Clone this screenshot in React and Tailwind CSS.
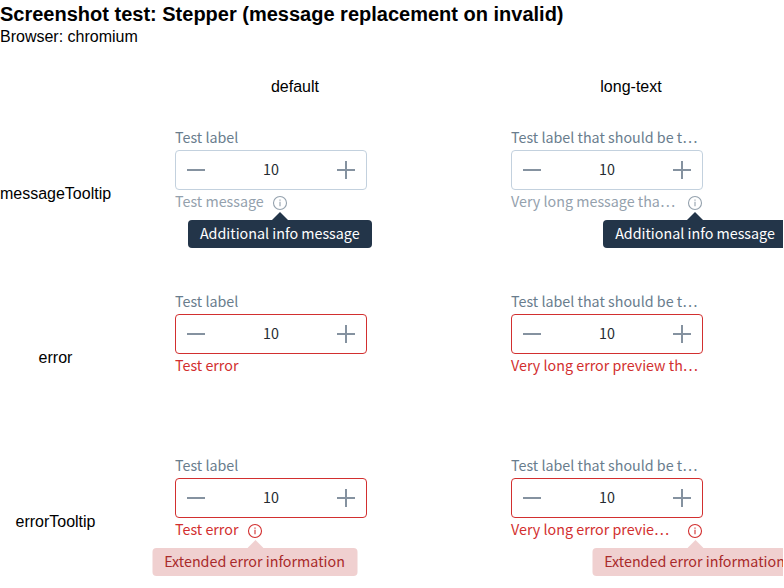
const ui = "font-['Noto_Sans_CJK_SC',sans-serif] text-[14.3px] leading-6";

function InfoIcon() {
  return (
    <svg width="16" height="16" viewBox="0 0 16 16" fill="none" className="block">
      <circle cx="8" cy="8" r="6.5" stroke="currentColor" strokeWidth="1.1" />
      <path d="M8 6.8v4.4M8 4.6v1.2" stroke="currentColor" strokeWidth="1.1" />
    </svg>
  );
}

function Tooltip({ text, error }) {
  return (
    <div className={`absolute top-[25px] -translate-x-1/2 h-7 rounded flex items-center justify-center whitespace-nowrap ${error ? "left-[7.5px] w-[205px] bg-[#f0d0d0] text-[#a92a2a]" : "left-1/2 w-[184px] bg-[#233549] text-white"}`}>
      <svg width="16" height="8" viewBox="0 0 16 8" className={`absolute -top-2 -translate-x-1/2 ${error ? "left-[103px] text-[#f0d0d0]" : "left-1/2 text-[#233549]"}`}>
        <path d="M0 8L8 0l8 8z" fill="currentColor" />
      </svg>
      <span className="relative -top-px">{text}</span>
    </div>
  );
}

function Stepper({ label, message, error, tooltip }) {
  return (
    <div className={`w-48 h-[136px] ${ui}`}>
      <div className="h-6 leading-[22px] text-[#697d8d] whitespace-nowrap">{label}</div>
      <div className={`h-10 rounded border flex items-center justify-between px-[11px] text-[#252a31] ${error ? "border-[#d22f2f]" : "border-[#c3d1de]"}`}>
        <svg width="18" height="18" viewBox="0 0 18 18"><path d="M0 9h18" stroke="#8592a0" strokeWidth="2" /></svg>
        <span className="leading-[22px] -mt-0.5">10</span>
        <svg width="18" height="18" viewBox="0 0 18 18"><path d="M0 9h18M9 0v18" stroke="#8592a0" strokeWidth="2" /></svg>
      </div>
      <div className={`h-6 leading-[22px] flex whitespace-nowrap ${message.length > 14 ? "justify-between" : "gap-2"} ${error ? "text-[#d22f2f]" : "text-[#94a1ad]"}`}>
        <span className={error ? "min-w-16" : ""}>{message}</span>
        {tooltip && (
          <span className="relative mt-[5px] h-4 w-4">
            <InfoIcon />
            <Tooltip text={tooltip} error={error} />
          </span>
        )}
      </div>
    </div>
  );
}

const longLabel = "Test label that should be t…";
const rows = [
  { name: "messageTooltip", short: "Test message", long: "Very long message tha…", tooltip: "Additional info message" },
  { name: "error", short: "Test error", long: "Very long error preview th…", error: true },
  { name: "errorTooltip", short: "Test error", long: "Very long error previe…", tooltip: "Extended error information", error: true },
];

export default function App() {
  return (
    <div className="w-[783px] h-[588px] overflow-hidden bg-white text-black text-base font-['Liberation_Sans',Arial,sans-serif]">
      <h1 className="text-[20px] leading-7 font-bold whitespace-nowrap">Screenshot test: Stepper (message replacement on invalid)</h1>
      <div className="leading-[18px]">Browser: chromium</div>
      <div className="mt-[14px] h-[52px] pt-[17px] flex leading-[20px] text-center">
        <div className="ml-[127px] w-[336px] shrink-0">default</div>
        <div className="w-[336px] shrink-0">long-text</div>
      </div>
      {rows.map((row) => (
        <div key={row.name} className="flex h-[164px]">
          <div className="w-[111px] h-full flex items-center justify-center">{row.name}</div>
          <div className="ml-16 w-[336px] pt-[14px]">
            <Stepper label="Test label" message={row.short} error={row.error} tooltip={row.tooltip} />
          </div>
          <div className="w-60 pt-[14px]">
            <Stepper label={longLabel} message={row.long} error={row.error} tooltip={row.tooltip} />
          </div>
        </div>
      ))}
    </div>
  );
}
